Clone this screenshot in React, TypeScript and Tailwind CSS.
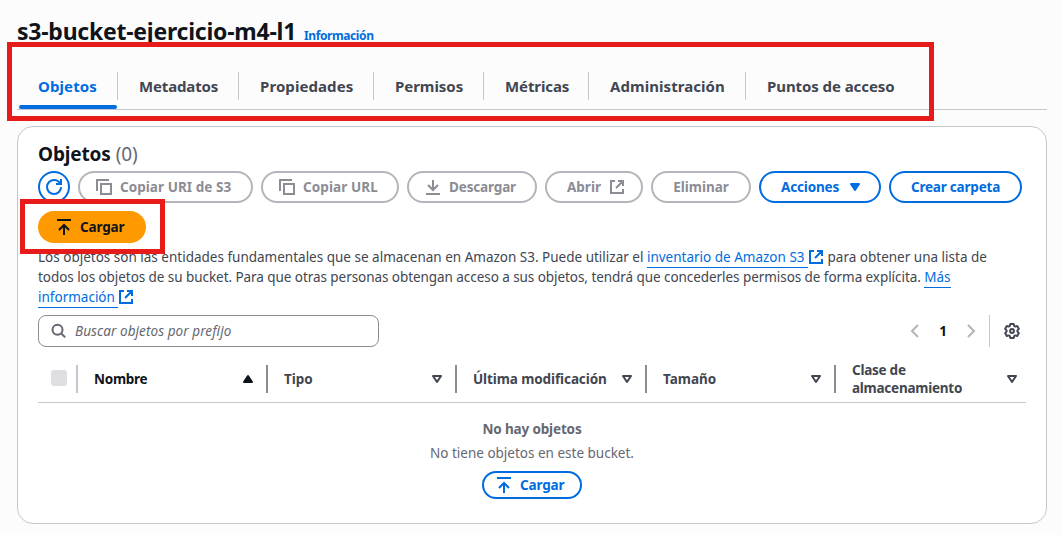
import type { ReactNode } from 'react';

function RefreshIcon() {
  return (
    <svg className="h-4 w-4" viewBox="0 0 16 16" fill="none" stroke="currentColor" strokeWidth="2">
      <path d="M15 8c0 3.87-3.13 7-7 7s-7-3.13-7-7 3.13-7 7-7c2.79 0 5.2 1.63 6.33 4" />
      <path d="M10 5h5V0" />
    </svg>
  );
}

function CopyIcon() {
  return (
    <svg className="h-4 w-4 shrink-0" viewBox="0 0 16 16" fill="none" stroke="currentColor" strokeWidth="2">
      <path d="M5 5h10v10H5z" />
      <path d="M13 1H1v11" />
    </svg>
  );
}

function DownloadIcon() {
  return (
    <svg className="h-4 w-4 shrink-0" viewBox="0 0 16 16" fill="none" stroke="currentColor" strokeWidth="2">
      <path d="M1 15h14M8 1v10M3 6l5 5 5-5" />
    </svg>
  );
}

function UploadIcon() {
  return (
    <svg className="h-4 w-4 shrink-0" viewBox="0 0 16 16" fill="none" stroke="currentColor" strokeWidth="2">
      <path d="M1 1h14M8 16V6M3 11l5-5 5 5" />
    </svg>
  );
}

function ExternalIcon({ className = '' }: { className?: string }) {
  return (
    <svg className={`h-4 w-4 shrink-0 ${className}`} viewBox="0 0 16 16" fill="none" stroke="currentColor" strokeWidth="2">
      <path d="M6 2H2v12h12v-4M9 2h5v5M7 9l7-7" />
    </svg>
  );
}

function SearchIcon() {
  return (
    <svg className="h-4 w-4 shrink-0 text-[#656871]" viewBox="0 0 16 16" fill="none" stroke="currentColor" strokeWidth="2">
      <circle cx="6.500" cy="6.700" r="5" />
      <path d="m10 10.200 4.200 4.200" />
    </svg>
  );
}

function GearIcon() {
  return (
    <svg className="h-4 w-4 text-[#424650]" viewBox="0 0 16 16" fill="none" stroke="currentColor" strokeWidth="2" strokeLinejoin="round">
      <path d="M6.300 1h3.400l.5 2 1 .6 2-.6 1.700 2.900L13.400 7.400v1.200l1.500 1.500-1.700 2.900-2-.6-1 .6-.5 2H6.300l-.5-2-1-.6-2 .6-1.700-2.900 1.500-1.500V7.400L1.100 5.900 2.800 3l2 .6 1-.6z" />
      <circle cx="8" cy="8" r="1.900" />
    </svg>
  );
}

function Chevron({ flip = false }: { flip?: boolean }) {
  return (
    <svg className="h-4 w-4 text-[#b4b4bb]" viewBox="0 0 16 16" fill="none" stroke="currentColor" strokeWidth="2">
      <path d={flip ? 'm5 2 6 6-6 6' : 'm11 2-6 6 6 6'} />
    </svg>
  );
}

function SortIcon({ active = false }: { active?: boolean }) {
  return (
    <svg className="h-4 w-4 shrink-0" viewBox="0 0 16 16" fill="none" stroke="currentColor" strokeWidth="2" strokeLinejoin="round">
      {active ? <path d="M4 11h8L8 5z" fill="currentColor" /> : <path d="M4 5h8l-4 6z" />}
    </svg>
  );
}

const variants = {
  disabled: 'border-2 border-[#b4b4bb] text-[#8c8c94]',
  normal: 'border-2 border-[#006ce0] text-[#006ce0]',
};

function Button({ variant, className, children }: { variant: keyof typeof variants; className: string; children: ReactNode }) {
  return (
    <button className={`flex h-8 shrink-0 items-center rounded-full bg-white text-[13.500px] leading-5 font-bold whitespace-nowrap ${variants[variant]} ${className}`}>
      {children}
    </button>
  );
}

const tabs = [
  { label: 'Objetos', box: 'w-[101px]', text: 'text-[#006ce0] tracking-[0.1px]' },
  { label: 'Metadatos', box: 'w-[121px]', text: 'tracking-[-0.15px]' },
  { label: 'Propiedades', box: 'w-[135px]', text: 'tracking-[0.08px]' },
  { label: 'Permisos', box: 'w-[110px]', text: 'tracking-[-0.05px]' },
  { label: 'Métricas', box: 'w-[105px]', text: 'tracking-[-0.1px]' },
  { label: 'Administración', box: 'w-[157px]', text: 'tracking-[0.06px]' },
  { label: 'Puntos de acceso', box: 'w-[200px]', text: 'tracking-[-0.08px]' },
];

const columns = [
  { label: 'Nombre', box: 'w-[190px] text-[#0f141a]', text: 'tracking-[-0.25px]', active: true },
  { label: 'Tipo', box: 'w-[189px]', text: '', active: false },
  { label: 'Última modificación', box: 'w-[190px]', text: 'tracking-[-0.1px]', active: false },
  { label: 'Tamaño', box: 'w-[189px]', text: '', active: false },
];

export default function App() {
  return (
    <div className="relative h-[535px] w-[1062px] overflow-hidden bg-[#fcfcfd] pl-[17px] font-['Noto_Sans','Open_Sans',sans-serif] text-[#424650]">
      <header className="flex h-[46px] items-baseline pt-[15px] whitespace-nowrap">
        <h1 className="w-[287px] text-[23px] leading-[32px] font-bold tracking-[-0.24px] text-[#0f141a]">s3-bucket-ejercicio-m4-l1</h1>
        <a className="text-[12px] leading-4 font-bold tracking-[-0.4px] text-[#006ce0]">Información</a>
      </header>

      <nav className="flex h-16 w-[1030px] flex-col border-b border-[#c6c6cd]">
        <div className="flex pt-[26px]">
          {tabs.map((tab, i) => (
            <div
              key={tab.label}
              className={`flex h-7 shrink-0 items-center pl-[21px] text-[15px] font-bold whitespace-nowrap ${tab.box} ${i < tabs.length - 1 ? 'border-r border-[#c6c6cd]' : ''}`}
            >
              <span className={tab.text}>{tab.label}</span>
            </div>
          ))}
        </div>
        <div className="mt-[5px] ml-[2px] h-1 w-[98px] shrink-0 rounded-full bg-[#006ce0]" />
      </nav>

      <main className="mt-4 h-[398px] w-[1030px] rounded-2xl border border-[#c6c6cd] bg-white pt-[15px] pl-5">
        <h2 className="flex h-6 items-center gap-[5px] text-[19px] leading-6 font-bold tracking-[-0.15px] text-[#0f141a]">
          <span>Objetos</span>
          <span className="font-normal text-[#656871]">(0)</span>
        </h2>

        <div className="mt-[5px] flex gap-2">
          <Button variant="normal" className="w-8 justify-center">
            <RefreshIcon />
          </Button>
          <Button variant="disabled" className="w-[175px] gap-2 pl-4">
            <CopyIcon />
            <span className="tracking-[0.05px]">Copiar URI de S3</span>
          </Button>
          <Button variant="disabled" className="w-[138px] gap-2 pl-4">
            <CopyIcon />
            <span className="tracking-[0.1px]">Copiar URL</span>
          </Button>
          <Button variant="disabled" className="w-[130px] gap-2 pl-4">
            <DownloadIcon />
            <span className="tracking-[-0.15px]">Descargar</span>
          </Button>
          <Button variant="disabled" className="w-[98px] justify-between pr-4 pl-5">
            <span>Abrir</span>
            <ExternalIcon />
          </Button>
          <Button variant="disabled" className="w-[100px] justify-center">
            <span>Eliminar</span>
          </Button>
          <Button variant="normal" className="w-[122px] justify-between pr-4 pl-5">
            <span className="tracking-[-0.15px]">Acciones</span>
            <svg className="h-4 w-4" viewBox="0 0 16 16" fill="currentColor" stroke="currentColor" strokeWidth="2" strokeLinejoin="round">
              <path d="M4 5h8l-4 6z" />
            </svg>
          </Button>
          <Button variant="normal" className="w-[133px] justify-center">
            <span className="tracking-[-0.2px]">Crear carpeta</span>
          </Button>
        </div>
        <button className="mt-2 flex h-8 w-[108px] items-center gap-2 rounded-full bg-[#ff9900] pl-[18px] text-[13.500px] font-bold text-[#0f141a]">
          <UploadIcon />
          <span className="tracking-[-0.15px]">Cargar</span>
        </button>

        <div className="mt-1 flex flex-col text-[13.500px] leading-5 whitespace-nowrap">
          <p className="flex h-5">
            <span>Los objetos son las entidades fundamentales que se almacenan en Amazon S3. Puede utilizar el&nbsp;</span>
            <a className="flex h-[21px] border-b border-[#006ce0] text-[#006ce0]">inventario de Amazon S3&nbsp;</a>
            <ExternalIcon className="mt-0.5 text-[#006ce0]" />
            <span>&nbsp;para obtener una lista de</span>
          </p>
          <p className="flex h-5">
            <span className="tracking-[-0.06px]">todos los objetos de su bucket. Para que otras personas obtengan acceso a sus objetos, tendrá que concederles permisos de forma explícita.&nbsp;</span>
            <a className="flex h-[21px] border-b border-[#006ce0] text-[#006ce0]">Más</a>
          </p>
          <p className="flex h-5">
            <a className="flex h-[21px] border-b border-[#006ce0] text-[#006ce0]">información&nbsp;</a>
            <ExternalIcon className="mt-0.5 text-[#006ce0]" />
          </p>
        </div>

        <div className="mt-2 flex h-8 w-[988px] items-center">
          <div className="flex h-8 w-[341px] items-center gap-2 rounded-lg border border-[#8c8c94] pl-3 text-[13.500px] text-[#656871] italic">
            <SearchIcon />
            <span className="tracking-[0.08px]">Buscar objetos por prefijo</span>
          </div>
          <div className="ml-auto flex h-8 items-center">
            <Chevron />
            <span className="w-10 text-center text-[13.500px] font-bold text-[#0f141a]">1</span>
            <Chevron flip />
            <div className="ml-2.5 h-8 w-px bg-[#c6c6cd]" />
            <div className="mr-[6px] ml-[14px]">
              <GearIcon />
            </div>
          </div>
        </div>

        <div className="flex h-[56px] w-[988px] items-center border-b border-[#c6c6cd] pt-[8px] text-[13.500px] leading-[18px] font-bold">
          <div className="flex h-7 w-[40px] shrink-0 items-center border-r-2 border-[#c6c6cd] pl-[13px]">
            <div className="-mt-0.5 h-4 w-4 rounded-[3px] bg-[#dedee3]" />
          </div>
          {columns.map((column) => (
            <div
              key={column.label}
              className={`flex h-7 shrink-0 items-center justify-between border-r-2 border-[#8c8c94] pr-[10px] pl-4 whitespace-nowrap ${column.box}`}
            >
              <span className={column.text}>{column.label}</span>
              <SortIcon active={column.active} />
            </div>
          ))}
          <div className="flex flex-1 items-center justify-between pr-[6px] pl-4">
            <span className="tracking-[-0.25px]">
              Clase de
              <br />
              almacenamiento
            </span>
            <SortIcon />
          </div>
        </div>

        <div className="flex w-[988px] flex-col items-center pt-4 text-[13.500px] leading-5 text-[#656871]">
          <strong className="font-bold tracking-[-0.15px]">No hay objetos</strong>
          <p className="mt-1">No tiene objetos en este bucket.</p>
          <button className="mt-2 flex h-7 w-[100px] items-center gap-2 rounded-full border-2 border-[#006ce0] pl-3 font-bold text-[#006ce0]">
            <UploadIcon />
            <span className="tracking-[-0.15px]">Cargar</span>
          </button>
        </div>
      </main>

      <div className="absolute top-[42px] left-[7px] h-[79px] w-[927px] border-[5px] border-[#e81b1b]" />
      <div className="absolute top-[199px] left-[20px] h-[55px] w-[145px] border-[5px] border-[#e81b1b]" />
    </div>
  );
}
